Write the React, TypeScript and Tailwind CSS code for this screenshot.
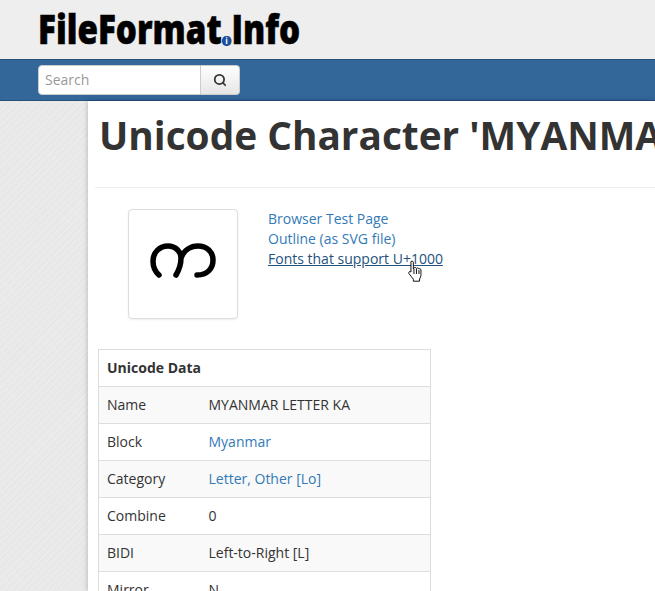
import React from "react";
import { Search } from "lucide-react";

const rows: { label: string; value: string; link?: boolean }[] = [
  { label: "Name", value: "MYANMAR LETTER KA" },
  { label: "Block", value: "Myanmar", link: true },
  { label: "Category", value: "Letter, Other [Lo]", link: true },
  { label: "Combine", value: "0" },
  { label: "BIDI", value: "Left-to-Right [L]" },
  { label: "Mirror", value: "N" },
];

function HandCursor() {
  return (
    <svg className="absolute left-[406px] top-[260px]" width="19" height="23" viewBox="2.500 0 14.500 23">
      <path
        d="M5 2.200c0-1.400 2.600-1.400 2.600 0V9l.6-1c.8-.8 2.200-.5 2.400.4.6-.8 2.200-.6 2.400.5.8-.6 2.200-.2 2.200 1v4.600c0 2-.6 3-1.400 4.500v2.200H7.600v-2C6.400 17.800 5 15.800 3.200 13.600c-1-1.400 .8-2.800 2-1.600V2.200z"
        fill="#fff"
        stroke="#111"
        strokeWidth="1"
        strokeLinejoin="round"
      />
      <path d="M8.200 9v5M10.700 9v5M13.200 10v4" stroke="#111" strokeWidth="1" fill="none" />
    </svg>
  );
}

export default function App() {
  return (
    <div className="relative h-[591px] w-[655px] overflow-hidden bg-white font-['Open_Sans',sans-serif] text-sm text-[#333]">
      {/* Logo */}
      <div className="h-[59px] bg-[#eeeeee] pl-[38px]">
        <div className="flex h-[57px] w-[340px] origin-left scale-x-[0.81] items-center text-[41px] leading-none font-extrabold text-black [-webkit-text-stroke:0.6px_#000]">
          <span>FileFormat</span>
          <span className="mt-[25px] flex h-[10px] w-[12px] items-center justify-center rounded-full bg-[#1c4f9c] text-[8px] text-white [-webkit-text-stroke:0]">
            i
          </span>
          <span>Info</span>
        </div>
      </div>

      {/* Nav */}
      <div className="flex h-[42px] items-center border-y border-y-[#24507c] bg-[#336699] pl-[38px]">
        <div className="flex h-[30px] w-[163px] items-center rounded-l-[4px] border border-[#ccc] bg-white pl-[6px] text-[#999]">
          Search
        </div>
        <div className="flex h-[30px] w-[39px] items-center justify-center rounded-r-[4px] border border-l-0 border-[#ccc] bg-gradient-to-b from-white to-[#e6e6e6]">
          <Search size={14} strokeWidth={3} className="text-[#333]" />
        </div>
      </div>

      <div className="flex h-[490px]">
        <div className="h-full w-[88px] bg-[#e8e8e8] bg-[repeating-linear-gradient(45deg,rgba(255,255,255,0.16)_0px,rgba(255,255,255,0)_2px,rgba(255,255,255,0)_3px),repeating-linear-gradient(-45deg,rgba(255,255,255,0.14)_0px,rgba(255,255,255,0)_2px,rgba(0,0,0,0.01)_5px)]" />
        <div className="h-full flex-1 overflow-hidden bg-white pl-[10px] shadow-[0_0_5px_rgba(0,0,0,0.25)]">
          <h1 className="mt-[12px] ml-[1px] text-[38.8px] leading-[44px] font-bold whitespace-nowrap">
            Unicode Character 'MYANMAR LETTER KA' (U+1000)
          </h1>
          <div className="mt-[30px] -ml-[3px] border-t border-[#eee]" />

          <div className="mt-[21px] flex">
            <div className="ml-[30px] flex h-[110px] w-[110px] items-center justify-center rounded-[4px] border border-[#ddd] bg-white shadow-[0_1px_2px_rgba(0,0,0,0.075)]">
              <svg width="66" height="48" viewBox="150 240 66 48">
                <path
                  d="M159 275C154.500 271 153 266 153 261 153 252 160 246 168 246 176 246 181 252 181 258 181 264 179 270 176 275M181 258C184 250 191 246 198 246 207 246 213 252 213 260 213 269 207 275 197 275"
                  fill="none"
                  stroke="#000"
                  strokeWidth="5.500"
                  strokeLinecap="round"
                />
              </svg>
            </div>
            <div className="ml-[30px] flex flex-col leading-[20px] text-[#337ab7]">
              <a>Browser Test Page</a>
              <a>Outline (as SVG file)</a>
              <a className="text-[#23527c] underline">Fonts that support U+1000</a>
            </div>
          </div>

          <table className="mt-[30px] w-[333px] table-fixed border-collapse border border-[#ddd]">
            <colgroup>
              <col className="w-[110px]" />
              <col />
            </colgroup>
            <thead>
              <tr>
                <th colSpan={2} className="h-[37px] border border-[#ddd] px-[8px] text-left font-bold">
                  Unicode Data
                </th>
              </tr>
            </thead>
            <tbody>
              {rows.map((r, i) => (
                <tr key={r.label} className={i % 2 === 0 ? "bg-[#f9f9f9]" : ""}>
                  <td className="h-[37px] border border-x-0 border-[#ddd] pl-[8px]">{r.label}</td>
                  <td className="h-[37px] border border-x-0 border-[#ddd] pl-0">
                    {r.link ? <a className="text-[#337ab7]">{r.value}</a> : r.value}
                  </td>
                </tr>
              ))}
            </tbody>
          </table>
        </div>
      </div>

      <HandCursor />
    </div>
  );
}
